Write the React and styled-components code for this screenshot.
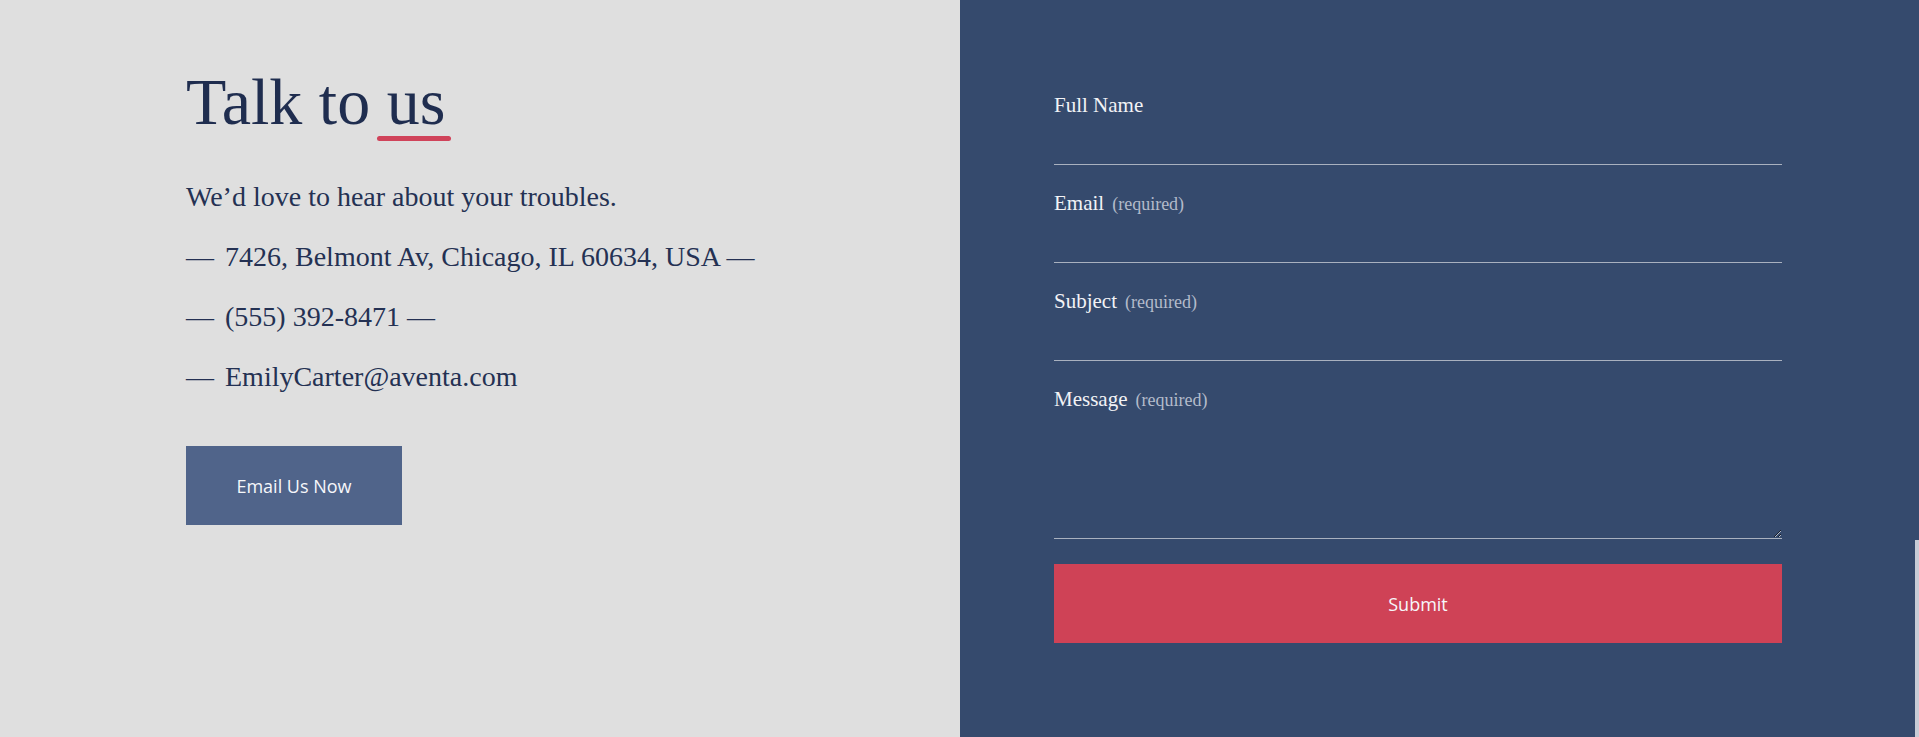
import React from "react";
import styled, { createGlobalStyle } from "styled-components";

const GlobalStyle = createGlobalStyle`
  html, body {
    margin: 0;
    padding: 0;
    background: #dfdfdf;
  }
  * {
    box-sizing: border-box;
  }
`;

const Page = styled.div`
  display: grid;
  grid-template-columns: 960px 1fr;
  min-height: 737px;
`;

const InfoPanel = styled.section`
  background: #dfdfdf;
  padding: 63px 0 0 186px;
  font-family: "Liberation Serif", "DejaVu Serif", serif;
  color: #1f2d4f;
`;

const Heading = styled.h1`
  margin: 0 0 27px;
  font-size: 66px;
  font-weight: 400;
  line-height: 77px;
`;

const Marked = styled.span`
  position: relative;
  display: inline-block;

  &::after {
    content: "";
    position: absolute;
    left: -10px;
    right: -6px;
    bottom: -1px;
    height: 5px;
    border-radius: 3px;
    background: #d0435a;
  }
`;

const Line = styled.p`
  margin: 0;
  font-size: 28px;
  line-height: 60px;
  color: #243153;
`;

const Dash = styled.span`
  margin-right: 11px;
`;

const ActionButton = styled.button`
  display: flex;
  align-items: center;
  justify-content: center;
  width: 216px;
  height: 79px;
  margin-top: 39px;
  border: none;
  padding: 0;
  background: ${(p) => p.$color};
  color: #f6f7fa;
  font-family: "Open Sans", "Liberation Sans", sans-serif;
  font-size: 18px;
  cursor: pointer;
`;

const FormPanel = styled.section`
  position: relative;
  background: #354a6d;
  padding: 89px 137px 0 94px;
  font-family: "Liberation Serif", "DejaVu Serif", serif;
`;

const Form = styled.form`
  display: flex;
  flex-direction: column;
`;

const Field = styled.label`
  display: flex;
  flex-direction: column;
  margin-bottom: 22px;
`;

const LabelRow = styled.div`
  display: flex;
  align-items: baseline;
  gap: 8px;
  height: 32px;
  line-height: 32px;
  font-size: 21px;
  color: #f2f3f6;
`;

const Hint = styled.span`
  font-size: 18px;
  color: #b3bbca;
`;

const Input = styled.input`
  height: 44px;
  border: none;
  border-bottom: 1px solid #a9b1bf;
  background: transparent;
  outline: none;
  color: #fff;
  font: inherit;
  font-size: 20px;
`;

const TextArea = styled.textarea`
  height: 124px;
  border: none;
  border-bottom: 1px solid #a9b1bf;
  background: transparent;
  outline: none;
  color: #fff;
  font: inherit;
  font-size: 20px;
`;

const SubmitButton = styled(ActionButton)`
  width: 100%;
  margin-top: 3px;
`;

const ScrollEdge = styled.div`
  position: absolute;
  right: 0;
  top: 540px;
  bottom: 0;
  width: 4px;
  background: #c7ccd6;
`;

const fields = [
  { name: "name", label: "Full Name", required: false },
  { name: "email", label: "Email", required: true },
  { name: "subject", label: "Subject", required: true },
];

export default function App() {
  return (
    <>
      <GlobalStyle />
      <Page>
        <InfoPanel>
          <Heading>
            Talk to <Marked>us</Marked>
          </Heading>
          <Line>We’d love to hear about your troubles.</Line>
          <Line>
            <Dash>—</Dash>7426, Belmont Av, Chicago, IL 60634, USA —
          </Line>
          <Line>
            <Dash>—</Dash>(555) 392-8471 —
          </Line>
          <Line>
            <Dash>—</Dash>EmilyCarter@aventa.com
          </Line>
          <ActionButton $color="#50648a">Email Us Now</ActionButton>
        </InfoPanel>

        <FormPanel>
          <Form onSubmit={(e) => e.preventDefault()}>
            {fields.map((f) => (
              <Field key={f.name}>
                <LabelRow>
                  {f.label}
                  {f.required ? <Hint>(required)</Hint> : null}
                </LabelRow>
                <Input type="text" name={f.name} />
              </Field>
            ))}
            <Field>
              <LabelRow>
                Message<Hint>(required)</Hint>
              </LabelRow>
              <TextArea name="message" />
            </Field>
            <SubmitButton $color="#cf4256" type="submit">
              Submit
            </SubmitButton>
          </Form>
          <ScrollEdge />
        </FormPanel>
      </Page>
    </>
  );
}
